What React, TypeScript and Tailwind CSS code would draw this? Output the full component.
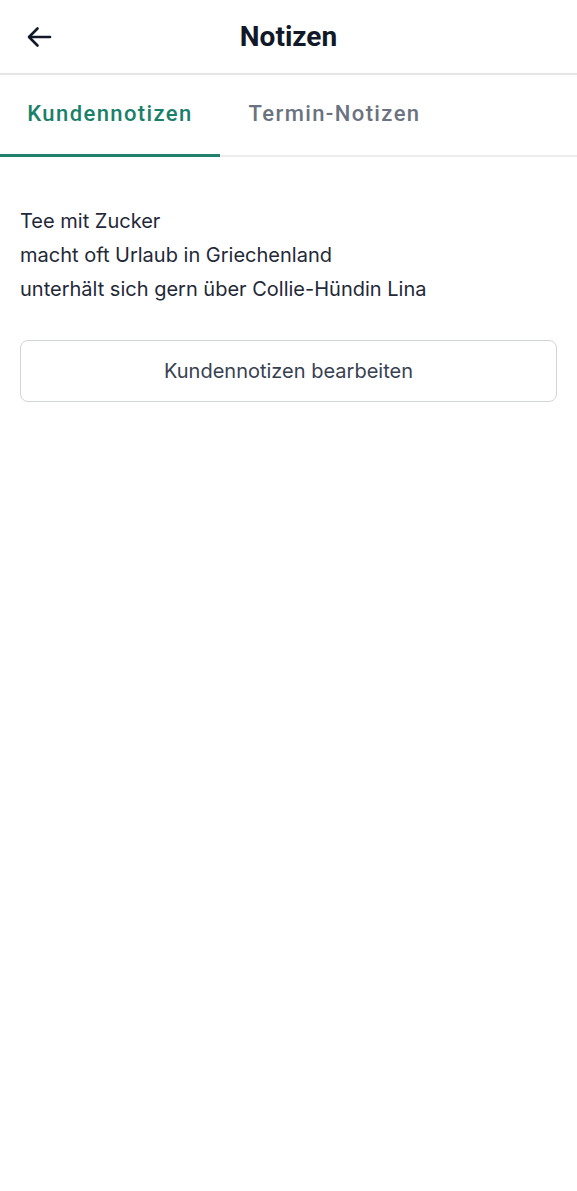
import React from "react";

export default function App() {
  return (
    <div className="min-h-[1191px] w-[577px] bg-white" style={{ fontFamily: "Inter, 'Noto Sans', sans-serif" }}>
      <div className="relative flex h-[75px] items-center justify-center border-b-2 border-[#e5e5e5]">
        <button className="absolute left-[24px] top-[21px] text-[#111827]">
          <svg width="32" height="32" viewBox="0 0 32 32" fill="none" stroke="currentColor" strokeWidth="2.6" strokeLinecap="round" strokeLinejoin="round">
            <path d="M26 16H5.5" />
            <path d="M13.5 7.5L5 16l8.5 8.5" />
          </svg>
        </button>
        <h1 className="text-[28px] font-bold text-[#111827]" style={{ fontFamily: "Roboto, sans-serif" }}>Notizen</h1>
      </div>
      <div className="flex h-[82px] border-b-2 border-[#ececf0]" style={{ fontFamily: "Roboto, sans-serif" }}>
        <div className="relative flex w-[220px] items-center justify-center text-[22px] font-medium tracking-[1.4px] text-[#19806a]">
          <span className="mb-[3px]">Kundennotizen</span>
          <div className="absolute bottom-[-2px] left-0 h-[3px] w-full bg-[#22806c]" />
        </div>
        <div className="flex w-[229px] items-center justify-center text-[22px] font-medium tracking-[1.4px] text-[#6b7280]">
          <span className="mb-[3px]">Termin-Notizen</span>
        </div>
      </div>
      <div className="px-[20px] pt-[47px]">
        <div className="text-[20px] leading-[34px] text-[#1f2937]">
          <p>Tee mit Zucker</p>
          <p>macht oft Urlaub in Griechenland</p>
          <p>unterhält sich gern über Collie-Hündin Lina</p>
        </div>
        <button className="mt-[34px] flex h-[62px] w-full items-center justify-center rounded-[8px] border border-[#d1d5db] text-[20px] text-[#374151]">
          Kundennotizen bearbeiten
        </button>
      </div>
    </div>
  );
}
